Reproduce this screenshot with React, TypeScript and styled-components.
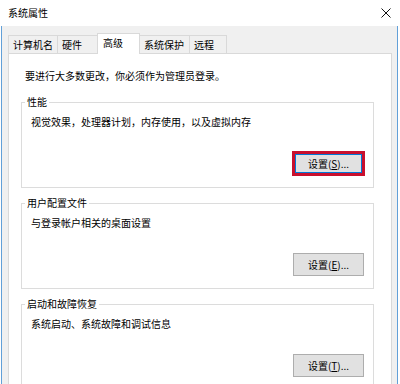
import React from "react";
import styled, { createGlobalStyle } from "styled-components";

const GlobalStyle = createGlobalStyle`
  html, body {
    margin: 0;
    padding: 0;
    background: #fff;
  }
  body {
    font-family: "Noto Sans CJK SC", "Noto Sans", sans-serif;
    font-size: 10px;
    color: #000;
  }
`;

const Window = styled.div`
  width: 397px;
  height: 384px;
  margin-left: 1px;
  display: flex;
  flex-direction: column;
  overflow: hidden;
`;

const TitleBar = styled.div`
  height: 26px;
  flex-shrink: 0;
  background: #fff;
  display: flex;
  align-items: center;
  justify-content: space-between;
  padding: 0 7px 0 7px;
  box-sizing: border-box;
`;

const Title = styled.div`
  font-size: 10px;
  line-height: 12px;
`;

const Body = styled.div`
  flex: 1;
  display: flex;
  flex-direction: column;
  background: #f0f0f0;
  border-left: 1px solid #62a0d8;
  border-right: 1px solid #62a0d8;
  padding: 7px 5px 0 6px;
  min-height: 0;
`;

const TabRow = styled.div`
  display: flex;
  align-items: flex-end;
  height: 20px;
  position: relative;
  z-index: 1;
  flex-shrink: 0;
`;

const Tab = styled.div<{ $width: number; $active?: boolean }>`
  box-sizing: border-box;
  width: ${(p) => p.$width}px;
  height: ${(p) => (p.$active ? 21 : 18)}px;
  margin-bottom: ${(p) => (p.$active ? -1 : 0)}px;
  margin-left: -1px;
  padding: ${(p) => (p.$active ? "3px 0 0 5px" : "1px 0 0 4px")};
  line-height: ${(p) => (p.$active ? 12 : 16)}px;
  background: ${(p) => (p.$active ? "#fff" : "#f0f0f0")};
  border: 1px solid #d9d9d9;
  border-bottom: none;
  position: relative;
  z-index: ${(p) => (p.$active ? 2 : 1)};
  white-space: nowrap;

  &:first-child {
    margin-left: 0;
  }
`;

const Panel = styled.div`
  flex: 1;
  background: #fff;
  border: 1px solid #d9d9d9;
  border-bottom: none;
  padding: 16px 17px 0 12px;
`;

const Intro = styled.div`
  line-height: 12px;
  padding-left: 4px;
  margin-bottom: 14px;
`;

const Group = styled.fieldset`
  margin: 0 0 9px;
  padding: 0;
  border: 1px solid #dcdcdc;
  min-width: 0;
`;

const Legend = styled.legend`
  margin-left: 3px;
  padding: 0 2px;
  line-height: 12px;
  font-size: 10px;
`;

const GroupBody = styled.div`
  display: flex;
  flex-direction: column;
  padding: 8px 9px 12px 9px;
`;

const Desc = styled.div`
  line-height: 12px;
`;

const ButtonRow = styled.div`
  display: flex;
  justify-content: flex-end;
  margin-top: 24px;
`;

const Button = styled.button<{ $marked?: boolean }>`
  box-sizing: border-box;
  width: 71px;
  height: 23px;
  padding: 0;
  font-family: inherit;
  font-size: 10px;
  line-height: 12px;
  color: #000;
  background: #e1e1e1;
  border: ${(p) => (p.$marked ? "2px solid #c8102e" : "1px solid #adadad")};
  box-shadow: ${(p) =>
    p.$marked ? "0 0 0 1px #c8102e, inset 0 0 0 1px #0078d7" : "none"};
  display: flex;
  align-items: center;
  justify-content: center;
`;

const CloseIcon = () => (
  <svg width="10" height="10" viewBox="0 0 10 10">
    <path d="M0.5 0.5 L9.5 9.5 M9.5 0.5 L0.5 9.5" stroke="#111" strokeWidth="1" fill="none" />
  </svg>
);

const tabs = [
  { label: "计算机名", width: 50 },
  { label: "硬件", width: 41 },
  { label: "高级", width: 43, active: true },
  { label: "系统保护", width: 51 },
  { label: "远程", width: 38 },
];

const groups = [
  { title: "性能", desc: "视觉效果，处理器计划，内存使用，以及虚拟内存", key: "S", marked: true },
  { title: "用户配置文件", desc: "与登录帐户相关的桌面设置", key: "E" },
  { title: "启动和故障恢复", desc: "系统启动、系统故障和调试信息", key: "T" },
];

export default function App() {
  return (
    <>
      <GlobalStyle />
      <Window>
        <TitleBar>
          <Title>系统属性</Title>
          <CloseIcon />
        </TitleBar>
        <Body>
          <TabRow>
            {tabs.map((t) => (
              <Tab key={t.label} $width={t.width} $active={t.active}>
                {t.label}
              </Tab>
            ))}
          </TabRow>
          <Panel>
            <Intro>要进行大多数更改，你必须作为管理员登录。</Intro>
            {groups.map((g) => (
              <Group key={g.title}>
                <Legend>{g.title}</Legend>
                <GroupBody>
                  <Desc>{g.desc}</Desc>
                  <ButtonRow>
                    <Button $marked={g.marked}>
                      设置(<u>{g.key}</u>)...
                    </Button>
                  </ButtonRow>
                </GroupBody>
              </Group>
            ))}
          </Panel>
        </Body>
      </Window>
    </>
  );
}
